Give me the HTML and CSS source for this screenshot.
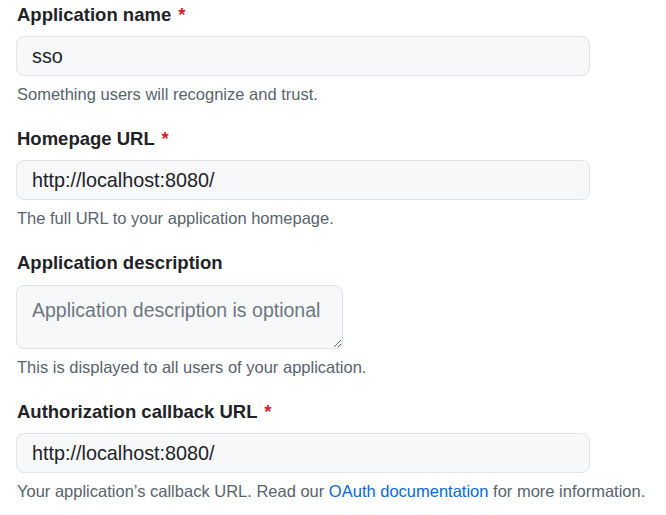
FILE: index.html
```html
<!DOCTYPE html>
<html lang="en">
<head>
<meta charset="utf-8">
<title>Register OAuth application</title>
<link rel="stylesheet" href="styles.css">
</head>
<body>
<form class="form">
  <div class="field">
    <label class="label" for="name">Application name <span class="req">*</span></label>
    <input class="input" id="name" type="text" value="sso">
    <p class="note">Something users will recognize and trust.</p>
  </div>
  <div class="field">
    <label class="label" for="url">Homepage URL <span class="req">*</span></label>
    <input class="input" id="url" type="text" value="http://localhost:8080/">
    <p class="note">The full URL to your application homepage.</p>
  </div>
  <div class="field">
    <label class="label" for="desc">Application description</label>
    <textarea class="textarea" id="desc" placeholder="Application description is optional"></textarea>
    <p class="note">This is displayed to all users of your application.</p>
  </div>
  <div class="field">
    <label class="label" for="cb">Authorization callback URL <span class="req">*</span></label>
    <input class="input" id="cb" type="text" value="http://localhost:8080/">
    <p class="note">Your application’s callback URL. Read our <a class="link" href="#">OAuth documentation</a> for more information.</p>
  </div>
</form>
</body>
</html>
```
FILE: styles.css
```css
* { box-sizing: border-box; }
html, body { margin: 0; padding: 0; background: #ffffff; }
body {
  font-family: "Liberation Sans", Arial, sans-serif;
  color: #1f2328;
}
.form {
  display: flex;
  flex-direction: column;
  gap: 24px;
  padding: 4px 0 0 16px;
}
.field {
  display: flex;
  flex-direction: column;
  align-items: flex-start;
}
.label {
  font-size: 18.5px;
  font-weight: 700;
  line-height: 22px;
  margin: 0 0 10px 1px;
  color: #1f2328;
}
.req { color: #d1242f; margin-left: 2px; }
.input {
  width: 574px;
  height: 40px;
  padding: 0 15px;
  font-family: inherit;
  font-size: 19.8px;
  color: #1f2328;
  background: #f6f8fa;
  border: 1px solid #dfe3e8;
  border-radius: 8px;
  outline: none;
}
.textarea {
  width: 327px;
  height: 64px;
  margin-top: 1px;
  padding: 12px 15px;
  font-family: inherit;
  font-size: 19.5px;
  line-height: 24px;
  color: #1f2328;
  background: #f6f8fa;
  border: 1px solid #dfe3e8;
  border-radius: 8px;
  outline: none;
  resize: vertical;
}
.textarea::placeholder { color: #6e7781; }
.note {
  margin: 8px 0 0 1px;
  font-size: 16.5px;
  line-height: 20px;
  color: #59636e;
}
.link { color: #0969da; text-decoration: none; }
```
